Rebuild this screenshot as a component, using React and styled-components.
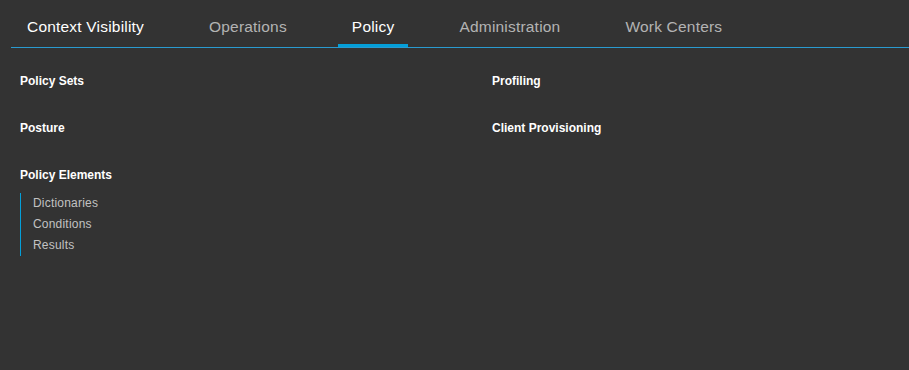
// react
import React from "react";

// styles with styled components
import styled, { createGlobalStyle } from "styled-components";

const GlobalStyle = createGlobalStyle`
  html, body {
    margin: 0;
    padding: 0;
    background: #333333;
    font-family: "Liberation Sans", Arial, sans-serif;
  }
`;

const tabs = [
  { label: "Context Visibility", tone: "bright" },
  { label: "Operations" },
  { label: "Policy", active: true },
  { label: "Administration" },
  { label: "Work Centers" },
];

const leftColumn = [
  { title: "Policy Sets" },
  { title: "Posture" },
  { title: "Policy Elements", items: ["Dictionaries", "Conditions", "Results"] },
];

const rightColumn = [{ title: "Profiling" }, { title: "Client Provisioning" }];

// css with styled components
const Page = styled.div`
  width: 909px;
  height: 370px;
  background: #333333;
  overflow: hidden;
`;

const TabBar = styled.nav`
  display: flex;
  gap: 37px;
  margin-left: 11px;
  padding-left: 2px;
  height: 47px;
  border-bottom: 1px solid #2a9bd0;
`;

const Tab = styled.div`
  display: flex;
  align-items: center;
  padding: 10px 14px 0;
  box-sizing: border-box;
  height: 47px;
  font-size: 15.5px;
  letter-spacing: 0.2px;
  color: ${(p) => (p.$active || p.$bright ? "#ffffff" : "#b3b3b3")};
  border-bottom: 3px solid ${(p) => (p.$active ? "#049fd9" : "transparent")};
`;

const Body = styled.div`
  display: grid;
  grid-template-columns: 472px 1fr;
  padding: 26px 0 0 20px;
`;

const Column = styled.div`
  display: flex;
  flex-direction: column;
  gap: 32px;
`;

const Section = styled.div`
  display: flex;
  flex-direction: column;
`;

const Heading = styled.div`
  font-size: 12px;
  font-weight: bold;
  line-height: 15px;
  color: #ffffff;
`;

const SubList = styled.ul`
  list-style: none;
  margin: 10px 0 0;
  padding: 0 0 0 12px;
  border-left: 1px solid #049fd9;
`;

const SubItem = styled.li`
  font-size: 12px;
  line-height: 21px;
  letter-spacing: 0.2px;
  color: #c2c2c2;
`;

const MenuColumn = ({ sections }) => (
  <Column>
    {sections.map((s) => (
      <Section key={s.title}>
        <Heading>{s.title}</Heading>
        {s.items && (
          <SubList>
            {s.items.map((i) => (
              <SubItem key={i}>{i}</SubItem>
            ))}
          </SubList>
        )}
      </Section>
    ))}
  </Column>
);

const App = () => {
  return (
    <Page>
      <GlobalStyle />
      <TabBar>
        {tabs.map((t) => (
          <Tab key={t.label} $active={t.active} $bright={t.tone === "bright"}>
            {t.label}
          </Tab>
        ))}
      </TabBar>
      <Body>
        <MenuColumn sections={leftColumn} />
        <MenuColumn sections={rightColumn} />
      </Body>
    </Page>
  );
};

export default App;
